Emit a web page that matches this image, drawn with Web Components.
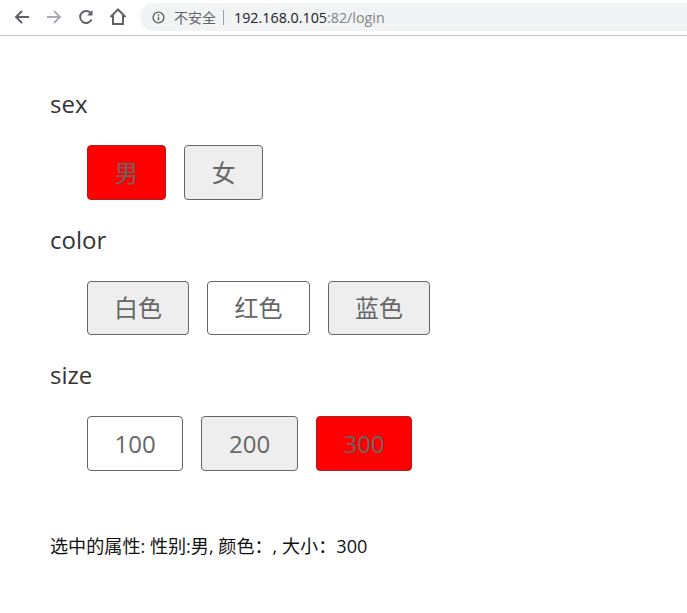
<!DOCTYPE html>
<html lang="zh">
<head>
<meta charset="utf-8">
<title>login</title>
<style>
  html, body { margin: 0; background: #fff; }
  body { font-family: "Open Sans", "Noto Sans CJK SC", sans-serif; color: #333; }
</style>
</head>
<body>

<browser-bar>
  <span slot="warn">不安全</span>
  <span slot="host">192.168.0.105</span><span slot="rest">:82/login</span>
</browser-bar>

<login-page>
  <attr-group label="sex">
    <attr-btn state="active" lift>男</attr-btn>
    <attr-btn state="off" lift>女</attr-btn>
  </attr-group>
  <attr-group label="color">
    <attr-btn state="off" h="54">白色</attr-btn>
    <attr-btn h="54">红色</attr-btn>
    <attr-btn state="off" h="54">蓝色</attr-btn>
  </attr-group>
  <attr-group label="size">
    <attr-btn>100</attr-btn>
    <attr-btn state="off">200</attr-btn>
    <attr-btn state="active">300</attr-btn>
  </attr-group>
  <p slot="result">选中的属性: 性别:男, 颜色：, 大小：300</p>
</login-page>

<template id="browser-bar-template">
  <style>
    :host {
      display: flex;
      align-items: center;
      height: 34px;
      padding: 0 0 1px 13px;
      border-bottom: 1px solid #c4c4c4;
      font-family: "Open Sans", "Noto Sans CJK SC", sans-serif;
      overflow: hidden;
    }
    svg { display: block; flex: none; fill: none; stroke: #5f6368; stroke-width: 2; }
    .nav { display: flex; align-items: center; gap: 14px; margin-right: 13px; }
    .omni {
      flex: 1;
      height: 28px;
      margin-right: -14px;
      display: flex;
      align-items: center;
      background: #f1f3f4;
      border-radius: 14px;
      padding-left: 12px;
      font-size: 14.3px;
    }
    .warn { color: #5f6368; font-size: 14px; margin-left: 9px; }
    .sep { width: 1px; height: 15px; background: #9aa0a6; margin: 0 10px 0 7px; }
    .host { color: #202124; }
    .rest { color: #80868b; }
  </style>
  <div class="nav">
    <svg width="18" height="18" viewBox="0 0 18 18"><path d="M16 9H3M9 3L3 9l6 6"/></svg>
    <svg width="18" height="18" viewBox="0 0 18 18" style="stroke:#a9adb1"><path d="M2 9h13M9 3l6 6-6 6"/></svg>
    <svg width="18" height="18" viewBox="0 0 18 18"><path d="M14.6 11.4A6 6 0 1 1 14 5.4"/><path d="M15.5 2v5.5H10" fill="#5f6368" stroke="none"/></svg>
    <svg width="18" height="18" viewBox="0 0 18 18"><path d="M1.5 9L9 1.5 16.5 9M4 7.5V16h10V7.5"/></svg>
  </div>
  <div class="omni">
    <svg width="13" height="13" viewBox="0 0 14 14" style="stroke-width:1.5"><circle cx="7" cy="7" r="5.8"/><path d="M7 6.2v4M7 3.5v1.5"/></svg>
    <span class="warn"><slot name="warn"></slot></span>
    <span class="sep"></span>
    <span class="host"><slot name="host"></slot></span><span class="rest"><slot name="rest"></slot></span>
  </div>
</template>

<template id="login-page-template">
  <style>
    :host { display: block; padding: 52px 50px 0; }
    .result { margin-top: 63px; font-size: 18.1px; line-height: 24px; color: #111; }
    ::slotted(p) { margin: 0; }
  </style>
  <slot></slot>
  <div class="result"><slot name="result"></slot></div>
</template>

<template id="attr-group-template">
  <style>
    :host { display: block; margin-bottom: 24px; }
    .label { font-size: 24px; line-height: 32px; color: #333; }
    .row { display: flex; gap: 18.3px; margin: 25px 0 0 37px; }
  </style>
  <div class="label"></div>
  <div class="row"><slot></slot></div>
</template>

<template id="attr-btn-template">
  <style>
    :host {
      display: flex;
      align-items: center;
      height: 55px;
      padding: 0 26.5px;
      box-sizing: border-box;
      border: 1px solid #666;
      border-radius: 4px;
      background: #fff;
      color: #666;
      font-size: 24px;
    }
    :host([h="54"]) { height: 54px; padding: 0 26.1px 3px; }
    :host([lift]) { padding-bottom: 2px; }
    :host([state="off"]) { background: #eee; }
    :host([state="active"]) { background: #f00; border-color: #a82020; }
  </style>
  <slot></slot>
</template>

<script>
  function tpl(id) {
    return document.getElementById(id).content.cloneNode(true);
  }

  customElements.define('browser-bar', class extends HTMLElement {
    constructor() {
      super();
      this.attachShadow({mode: 'open'}).appendChild(tpl('browser-bar-template'));
    }
  });

  customElements.define('login-page', class extends HTMLElement {
    constructor() {
      super();
      this.attachShadow({mode: 'open'}).appendChild(tpl('login-page-template'));
    }
  });

  customElements.define('attr-group', class extends HTMLElement {
    constructor() {
      super();
      this.attachShadow({mode: 'open'}).appendChild(tpl('attr-group-template'));
    }
    connectedCallback() {
      this.shadowRoot.querySelector('.label').textContent = this.getAttribute('label');
    }
  });

  customElements.define('attr-btn', class extends HTMLElement {
    constructor() {
      super();
      this.attachShadow({mode: 'open'}).appendChild(tpl('attr-btn-template'));
    }
  });
</script>
</body>
</html>
